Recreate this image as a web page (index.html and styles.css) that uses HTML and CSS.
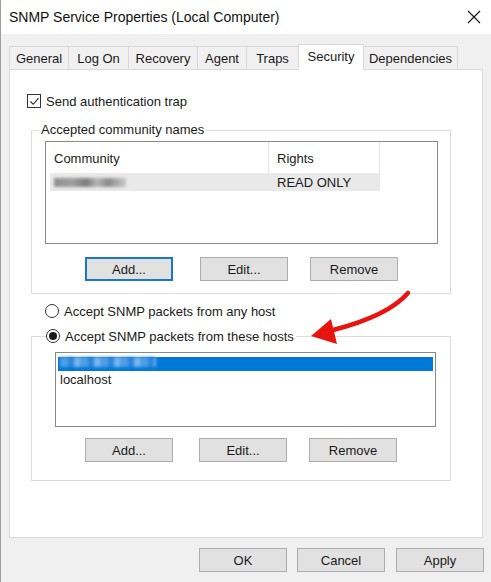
FILE: index.html
```html
<!DOCTYPE html>
<html>
<head>
<meta charset="utf-8">
<link rel="stylesheet" href="styles.css">
</head>
<body>
<div class="window">
  <div class="titlebar">
    <span class="title">SNMP Service Properties (Local Computer)</span>
    <svg class="close" width="14" height="14" viewBox="0 0 14 14"><path d="M1 1 L13 13 M13 1 L1 13" stroke="#111" stroke-width="1.1" fill="none"/></svg>
  </div>
  <div class="tabs">
    <div class="tab t-general">General</div>
    <div class="tab t-logon">Log On</div>
    <div class="tab t-recovery">Recovery</div>
    <div class="tab t-agent">Agent</div>
    <div class="tab t-traps">Traps</div>
    <div class="tab t-security active">Security</div>
    <div class="tab t-deps">Dependencies</div>
  </div>
  <div class="panel">
    <div class="check-row">
      <span class="checkbox"><svg width="11" height="11" viewBox="0 0 11 11"><path d="M1.5 5.5 L4.2 8.3 L9.6 2.2" stroke="#222" stroke-width="1.1" fill="none"/></svg></span>
      <span>Send authentication trap</span>
    </div>
    <fieldset class="group group-community">
      <legend class="legend-text">Accepted community names</legend>
      <div class="listview">
        <div class="lv-header">
          <div class="col col-community">Community</div>
          <div class="col col-rights">Rights</div>
        </div>
        <div class="lv-row">
          <div class="col col-community"><span class="blur blur-gray"></span></div>
          <div class="col col-rights">READ ONLY</div>
        </div>
      </div>
      <div class="btn-row row-one">
        <button class="btn focused">Add...</button>
        <button class="btn btn-edit">Edit...</button>
        <button class="btn btn-remove">Remove</button>
      </div>
    </fieldset>
    <div class="radio-row">
      <span class="radio"></span>
      <span>Accept SNMP packets from any host</span>
    </div>
    <fieldset class="group group-hosts">
      <legend class="legend-radio"><span class="radio checked"><span class="dot"></span></span><span>Accept SNMP packets from these hosts</span></legend>
      <div class="listbox">
        <div class="lb-item selected"><span class="blur blur-blue"></span></div>
        <div class="lb-item">localhost</div>
      </div>
      <div class="btn-row row-two">
        <button class="btn">Add...</button>
        <button class="btn btn-edit2">Edit...</button>
        <button class="btn btn-remove2">Remove</button>
      </div>
    </fieldset>
  </div>
  <div class="footer">
    <button class="btn">OK</button>
    <button class="btn">Cancel</button>
    <button class="btn">Apply</button>
  </div>
  <svg class="arrow" width="110" height="60" viewBox="305 288 110 60">
    <path d="M408 293 Q388 316 333 330" stroke="#e8140f" stroke-width="4.5" fill="none" stroke-linecap="round"/>
    <polygon points="311,336 331,319 337,344" fill="#e8140f"/>
  </svg>
</div>
</body>
</html>
```
FILE: styles.css
```css
* { box-sizing: border-box; }
html, body { margin: 0; padding: 0; }
body {
  width: 491px;
  height: 582px;
  overflow: hidden;
  font-family: "Liberation Sans", Arial, sans-serif;
  font-size: 13px;
  color: #1a1a1a;
  background: #f0f0f0;
}
.window {
  position: relative;
  width: 491px;
  height: 582px;
  border-left: 1px solid #9c9c9c;
  background: #f0f0f0;
  display: flex;
  flex-direction: column;
}
.titlebar {
  height: 34px;
  background: #ffffff;
  display: flex;
  align-items: center;
  justify-content: space-between;
  padding: 0 10px 0 8px;
}
.title { font-size: 14px; color: #111; }
.close { display: block; }

.tabs {
  display: flex;
  align-items: flex-end;
  height: 25px;
  margin: 10px 0 0 8px;
  position: relative;
  z-index: 2;
}
.tab {
  height: 23px;
  display: flex;
  align-items: center;
  justify-content: center;
  background: #f0f0f0;
  border: 1px solid #d9d9d9;
  border-bottom: none;
  margin-left: -1px;
  color: #1a1a1a;
}
.tab:first-child { margin-left: 0; }
.tab.active {
  height: 26px;
  margin-bottom: -1px;
  background: #ffffff;
  padding-bottom: 3px;
  z-index: 3;
  position: relative;
}
.t-general { width: 60px; }
.t-logon { width: 61px; }
.t-recovery { width: 70px; }
.t-agent { width: 50px; }
.t-traps { width: 53px; }
.t-security { width: 66px; }
.t-deps { width: 95px; }

.panel {
  margin: 0 0 0 8px;
  width: 474px;
  height: 469px;
  background: #ffffff;
  border: 1px solid #d9d9d9;
  padding: 24px 0 0 17px;
  position: relative;
  z-index: 1;
}
.check-row {
  display: flex;
  align-items: center;
  height: 14px;
}
.checkbox {
  width: 14px;
  height: 14px;
  border: 1px solid #333;
  background: #fff;
  display: flex;
  align-items: center;
  justify-content: center;
  margin-right: 5px;
}
.checkbox svg { display: block; }

.group {
  margin: 0;
  border: 1px solid #dcdcdc;
  min-width: 0;
}
.group-community {
  margin: 14px 0 0 4px;
  width: 420px;
  padding: 3px 12px 12px 13px;
}
.legend-text {
  padding: 0 2px;
  margin-left: -6px;
  line-height: 16px;
  height: 16px;
}
.listview {
  width: 393px;
  height: 103px;
  border: 1px solid #8a8a8a;
  background: #fff;
}
.lv-header {
  display: flex;
  height: 31px;
  align-items: stretch;
}
.lv-header .col {
  display: flex;
  align-items: center;
  padding: 1px 0 0 8px;
  border-right: 1px solid #e5e5e5;
}
.col-community { width: 223px; }
.col-rights { width: 111px; }
.lv-row {
  display: flex;
  height: 18px;
  margin-left: 4px;
  width: 330px;
  background: #e9e9e9;
}
.lv-row .col { display: flex; align-items: center; }
.lv-row .col-community { width: 219px; padding-left: 4px; }
.lv-row .col-rights { padding-left: 8px; }
.blur {
  display: block;
  filter: blur(1.5px);
}
.blur-gray {
  width: 72px;
  height: 9px;
  background: linear-gradient(90deg, #8f8f8f 0%, #a0a0a0 25%, #7c7c7c 45%, #b5b5b5 60%, #8a8a8a 75%, #c8c8c8 100%);
}
.blur-blue {
  width: 96px;
  height: 10px;
  margin-top: 2px;
  background: repeating-linear-gradient(90deg, #4f9fe6 0 8px, #2e86dc 8px 14px, #7ab6ee 14px 20px);
}

.btn-row {
  display: flex;
  height: 24px;
}
.row-one { margin: 13px 0 0 40px; }
.row-two { margin: 11px 0 0 40px; }
.btn {
  width: 88px;
  height: 24px;
  padding: 0;
  background: #e1e1e1;
  border: 1px solid #adadad;
  font-family: "Liberation Sans", Arial, sans-serif;
  font-size: 13px;
  color: #1a1a1a;
  border-radius: 0;
}
.btn.focused {
  border: 2px solid #1c76cc;
}
.btn-edit { margin-left: 27px; }
.btn-remove { margin-left: 22px; }
.btn-edit2 { margin-left: 26px; }
.btn-remove2 { margin-left: 22px; }

.radio-row {
  display: flex;
  align-items: center;
  height: 16px;
  margin: 9px 0 0 18px;
}
.radio {
  width: 14px;
  height: 14px;
  border: 1px solid #333;
  border-radius: 50%;
  background: #fff;
  margin-right: 5px;
  display: flex;
  align-items: center;
  justify-content: center;
  flex: none;
}
.dot {
  width: 8px;
  height: 8px;
  border-radius: 50%;
  background: #1a1a1a;
}
.group-hosts {
  margin: 9px 0 0 4px;
  width: 420px;
  padding: 8px 15px 18px 13px;
}
.legend-radio {
  display: flex;
  align-items: center;
  height: 16px;
  padding: 0 2px 0 0;
  margin-left: 1px;
}
.listbox {
  margin-left: 10px;
  width: 381px;
  height: 75px;
  border: 1px solid #8a8a8a;
  background: #fff;
  padding: 2px 2px 0 2px;
}
.lb-item {
  height: 15px;
  line-height: 17px;
  padding-left: 2px;
}
.lb-item.selected {
  height: 14px;
  background: #0078d7;
}

.footer {
  display: flex;
  justify-content: flex-end;
  gap: 10px;
  margin-top: 10px;
  padding-right: 7px;
}
.footer .btn:last-child { margin-left: 1px; }

.arrow {
  position: absolute;
  left: 304px;
  top: 288px;
  z-index: 5;
}
```
